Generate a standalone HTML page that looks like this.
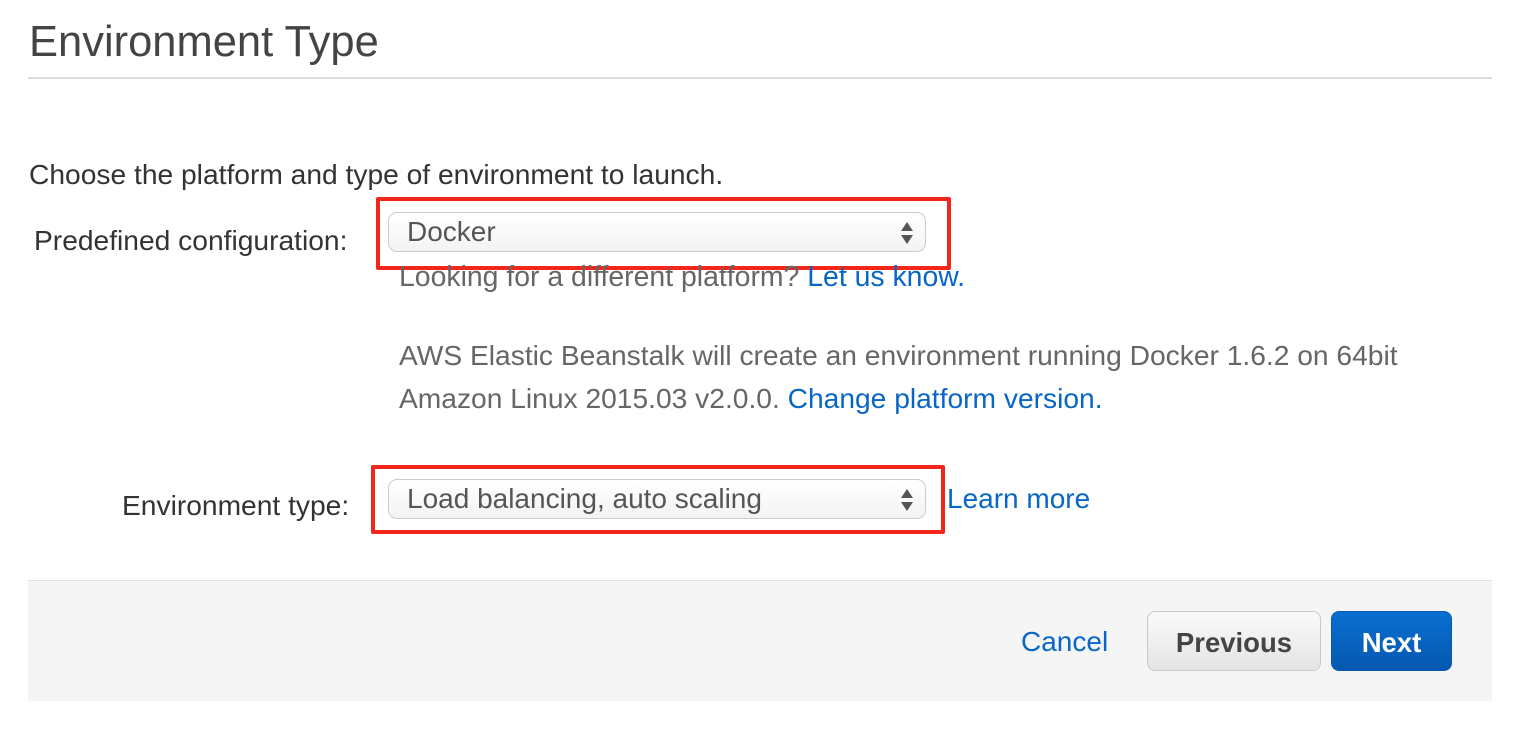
<!DOCTYPE html>
<html><head><style>
body{margin:0;width:1516px;height:730px;background:#fff;font-family:"Liberation Sans",Arial,sans-serif;position:relative;overflow:hidden}
.a{position:absolute;white-space:nowrap}
.sel{position:absolute;left:388px;width:538px;height:40px;border:1px solid #ccc;border-radius:9px;background:linear-gradient(#fff,#f3f3f3);box-sizing:border-box;font-size:28px;color:#555;line-height:38px;padding-left:18px}
.arr{position:absolute;top:9px;width:12px;height:22px}
.arr:before{content:"";position:absolute;left:0;top:0;border-left:6px solid transparent;border-right:6px solid transparent;border-bottom:9px solid #555}
.arr:after{content:"";position:absolute;left:0;top:13px;border-left:6px solid transparent;border-right:6px solid transparent;border-top:9px solid #555}
.red{position:absolute;border:4px solid #f2261a;box-sizing:border-box;border-radius:2px}
a{color:#0866c6;text-decoration:none}
</style></head><body>
<div class="a" style="left:29px;top:18px;font-size:43.5px;color:#444">Environment Type</div>
<div class="a" style="left:28px;top:77px;width:1464px;height:2px;background:#ddd"></div>
<div class="a" style="left:29px;top:158px;font-size:28.2px;color:#333">Choose the platform and type of environment to launch.</div>
<div class="a" style="left:34px;top:224px;font-size:28.2px;color:#333">Predefined configuration:</div>
<div class="sel" style="top:212px">Docker<div class="arr" style="right:12px"></div></div>
<div class="red" style="left:376px;top:197px;width:575px;height:73px"></div>
<div class="a" style="left:399px;top:261px;font-size:28.4px;color:#666">Looking for a different platform? <a>Let us know.</a></div>
<div class="a" style="left:399px;top:334px;font-size:28.2px;color:#666;line-height:43px">AWS Elastic Beanstalk will create an environment running Docker 1.6.2 on 64bit<br>Amazon Linux 2015.03 v2.0.0. <a>Change platform version.</a></div>
<div class="a" style="left:122px;top:489px;font-size:28.2px;color:#333">Environment type:</div>
<div class="sel" style="top:479px">Load balancing, auto scaling<div class="arr" style="right:12px"></div></div>
<div class="red" style="left:371px;top:465px;width:574px;height:69px"></div>
<div class="a" style="left:947px;top:483px;font-size:28px"><a>Learn more</a></div>
<div class="a" style="left:28px;top:580px;width:1464px;height:120px;background:#f5f5f5;border-top:1px solid #e2e2e2"></div>
<div class="a" style="left:1021px;top:626px;font-size:28px"><a>Cancel</a></div>
<div class="a" style="left:1147px;top:611px;width:174px;height:60px;box-sizing:border-box;border:1px solid #c8c8c8;border-radius:8px;background:linear-gradient(#fafafa,#e4e4e4);font-size:27.5px;font-weight:bold;color:#444;text-align:center;line-height:62px">Previous</div>
<div class="a" style="left:1331px;top:611px;width:121px;height:60px;box-sizing:border-box;border:1px solid #0859a8;border-radius:8px;background:linear-gradient(#0a6fd1,#0558b0);font-size:27.5px;font-weight:bold;color:#fff;text-align:center;line-height:62px">Next</div>
</body></html>
